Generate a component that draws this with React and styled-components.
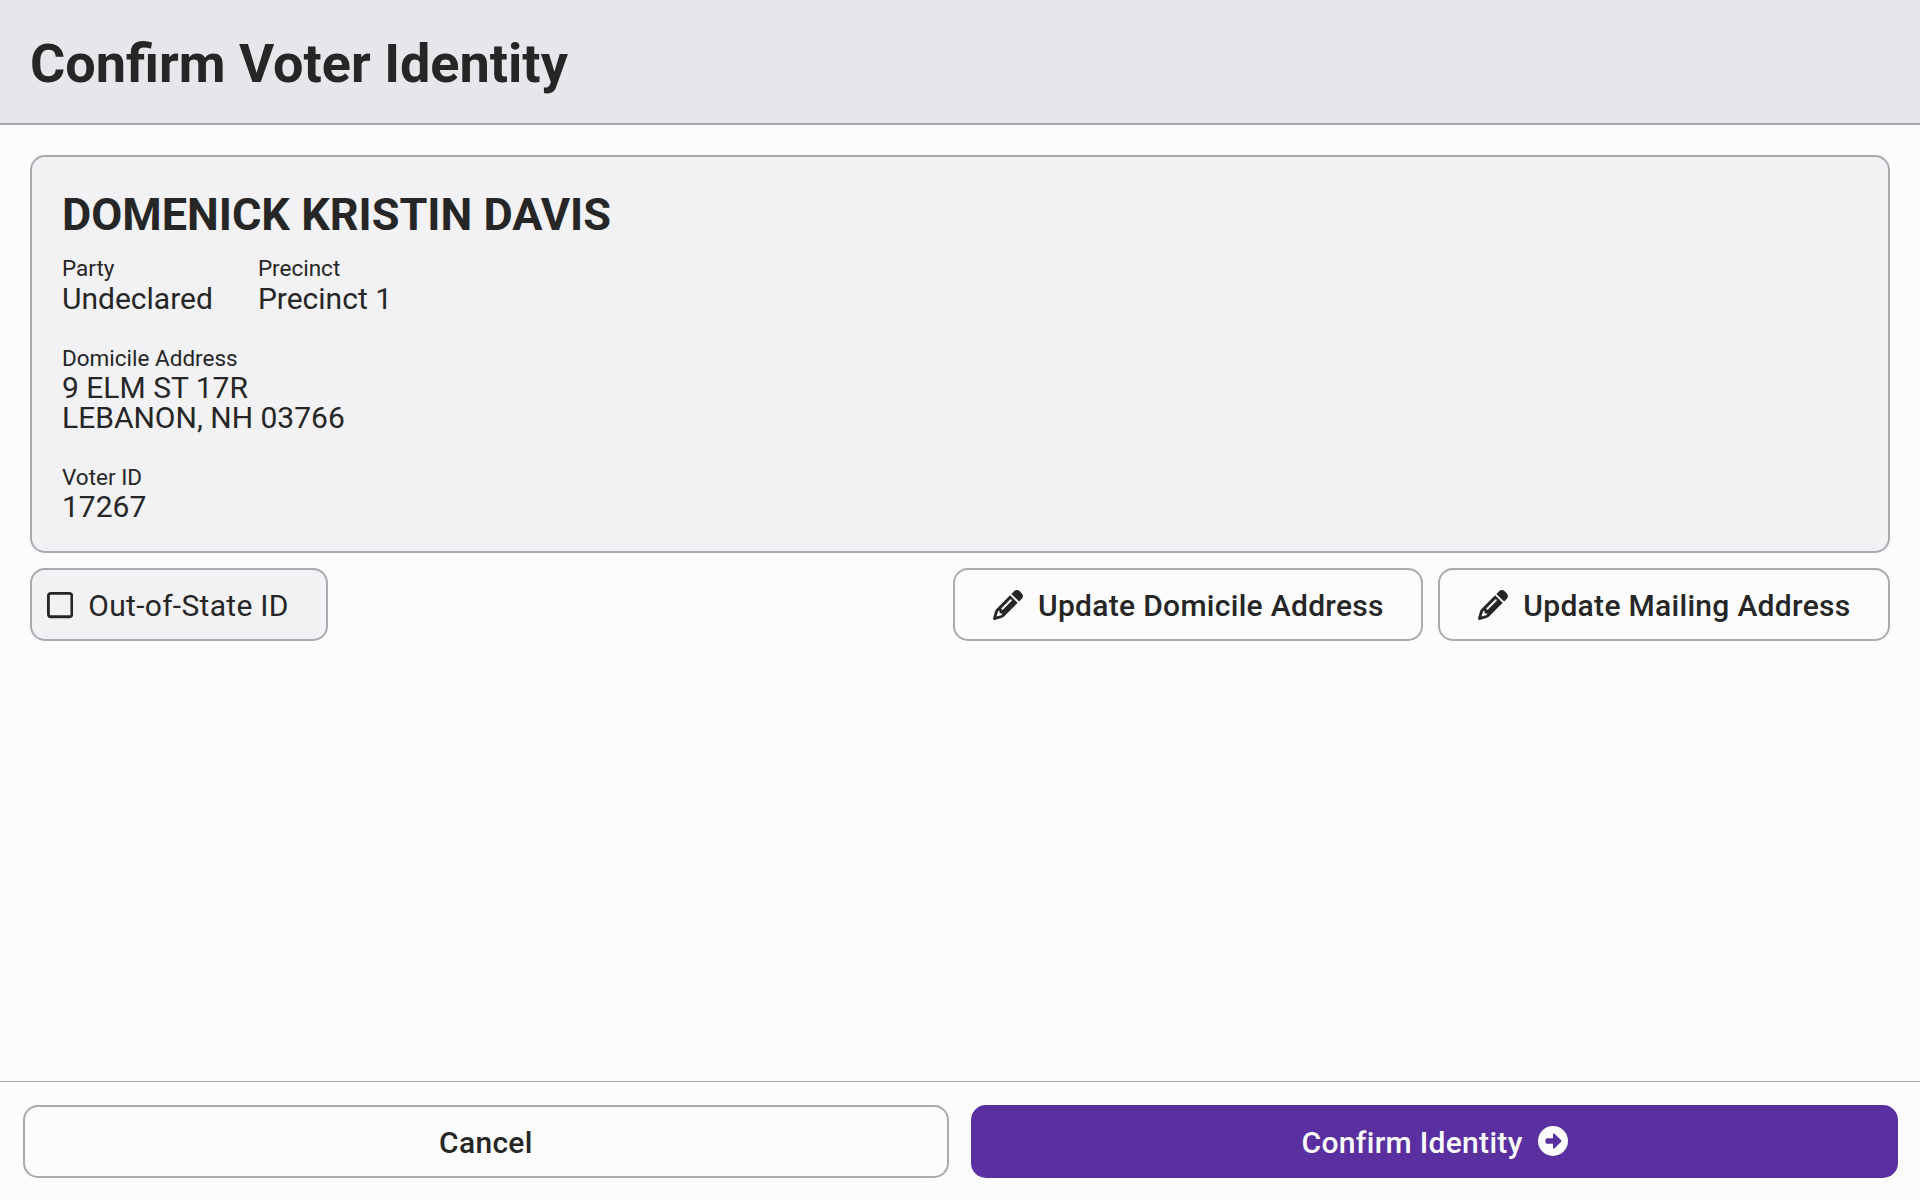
import React from 'react';
import styled, { createGlobalStyle, css } from 'styled-components';
import { FaCircleRight, FaPencil, FaRegSquare } from 'react-icons/fa6';

const color = {
  background: '#fcfcfc',
  containerLow: '#f2f1f4',
  containerHigh: '#e7e6eb',
  outline: '#aaa9b0',
  text: '#262626',
  primary: '#5a30a0',
};

const GlobalStyle = createGlobalStyle`
  * { box-sizing: border-box; }
  body {
    margin: 0;
    background: ${color.background};
    color: ${color.text};
    font-family: Roboto, "Liberation Sans", sans-serif;
    font-size: 30px;
    line-height: 1;
  }
`;

const Screen = styled.div`
  display: flex;
  flex-direction: column;
  height: 100vh;
`;

const Header = styled.header`
  height: 125px;
  padding: 5px 30px 0;
  display: flex;
  align-items: center;
  background: ${color.containerHigh};
  border-bottom: 2px solid ${color.outline};
`;

const Title = styled.h1`
  margin: 0;
  font-size: 54px;
  font-weight: 700;
  line-height: 1.2;
`;

const Main = styled.main`
  flex: 1;
  padding: 30px;
  display: flex;
  flex-direction: column;
  gap: 15px;
`;

const Card = styled.section`
  height: 398px;
  padding: 31px 30px 29px;
  background: ${color.containerLow};
  border: 2px solid ${color.outline};
  border-radius: 15px;
`;

const VoterName = styled.h2`
  margin: 0 0 15.3px;
  font-size: 45px;
  font-weight: 700;
  line-height: 54px;
`;

const Details = styled.div`
  display: flex;
  flex-direction: column;
  gap: 33px;
`;

const DetailRow = styled.div`
  display: flex;
  gap: 45px;
`;

const Caption = styled.div`
  margin-bottom: 3.75px;
  font-size: 22.5px;
  line-height: 22.5px;
`;

const Value = styled.div`
  line-height: 30px;
`;

const Actions = styled.div`
  display: flex;
  gap: 15px;
`;

const control = css`
  height: 73px;
  display: flex;
  align-items: center;
  gap: 15px;
  margin: 0;
  border: 2px solid ${color.outline};
  border-radius: 15px;
  color: ${color.text};
  font: inherit;
  letter-spacing: 0.01em;
  white-space: nowrap;
`;

const CheckboxButton = styled.button`
  ${control}
  padding: 0 37.5px 0 15px;
  margin-right: auto;
  background: ${color.containerLow};

  svg {
    width: 0.875em;
  }
`;

const Button = styled.button`
  ${control}
  justify-content: center;
  padding: 0 37.5px 0 38px;
  font-weight: 500;
  background: ${color.background};
  ${(p) =>
    p.$primary &&
    css`
      background: ${color.primary};
      border-color: ${color.primary};
      color: ${color.background};
    `}
`;

const Label = styled.span`
  padding-top: 3px;
`;

const Footer = styled.footer`
  display: grid;
  grid-template-columns: 1fr 1fr;
  gap: 22.5px;
  padding: 22.5px;
  border-top: 1px solid ${color.outline};
`;

function Detail({ label, children }) {
  return (
    <div>
      <Caption>{label}</Caption>
      {children}
    </div>
  );
}

export default function App() {
  return (
    <Screen>
      <GlobalStyle />
      <Header>
        <Title>Confirm Voter Identity</Title>
      </Header>
      <Main>
        <Card>
          <VoterName>DOMENICK KRISTIN DAVIS</VoterName>
          <Details>
            <DetailRow>
              <Detail label="Party">
                <Value>Undeclared</Value>
              </Detail>
              <Detail label="Precinct">
                <Value>Precinct 1</Value>
              </Detail>
            </DetailRow>
            <Detail label="Domicile Address">
              <Value>9 ELM ST 17R</Value>
              <Value>LEBANON, NH 03766</Value>
            </Detail>
            <Detail label="Voter ID">
              <Value>17267</Value>
            </Detail>
          </Details>
        </Card>
        <Actions>
          <CheckboxButton role="checkbox" aria-checked="false">
            <FaRegSquare />
            <Label>Out-of-State ID</Label>
          </CheckboxButton>
          <Button>
            <FaPencil />
            <Label>Update Domicile Address</Label>
          </Button>
          <Button>
            <FaPencil />
            <Label>Update Mailing Address</Label>
          </Button>
        </Actions>
      </Main>
      <Footer>
        <Button>
          <Label>Cancel</Label>
        </Button>
        <Button $primary>
          <Label>Confirm Identity</Label>
          <FaCircleRight />
        </Button>
      </Footer>
    </Screen>
  );
}
